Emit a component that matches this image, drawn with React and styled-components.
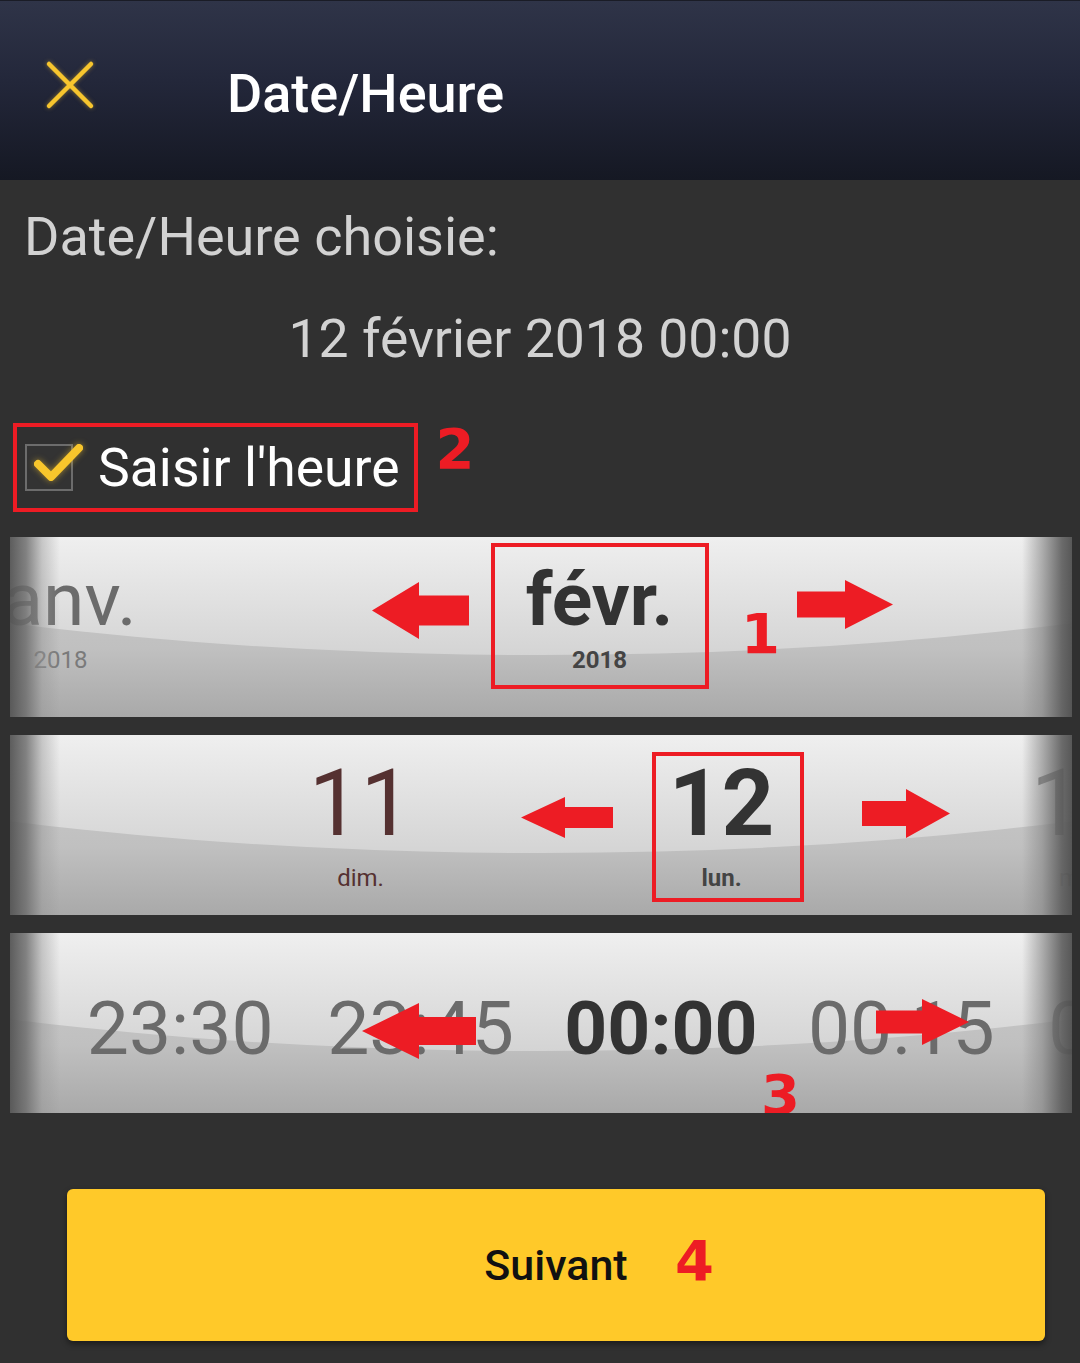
import React from "react";
import styled, { createGlobalStyle } from "styled-components";

const GlobalStyle = createGlobalStyle`
  html, body {
    margin: 0;
    padding: 0;
    background: #303030;
  }
  body {
    font-family: Roboto, "Noto Sans", sans-serif;
  }
`;

const months = [
  { label: "janv.", sub: "2018" },
  { label: "févr.", sub: "2018", active: true },
];

const days = [
  { label: "11", sub: "dim.", sunday: true },
  { label: "12", sub: "lun.", active: true },
  { label: "13", sub: "mar." },
];

const times = [
  { label: "23:30" },
  { label: "23:45" },
  { label: "00:00", active: true },
  { label: "00:15" },
  { label: "00:30" },
];

function CloseIcon() {
  return (
    <svg width="50" height="50" viewBox="0 0 50 50">
      <path
        d="M4 4 L46 46 M46 4 L4 46"
        stroke="#f7c52e"
        strokeWidth="4.5"
        strokeLinecap="round"
        fill="none"
      />
    </svg>
  );
}

function Arrow({ x, y, w, h, head, shaft, dir }) {
  const top = (h - shaft) / 2;
  const bottom = (h + shaft) / 2;
  const pts =
    dir === "right"
      ? `0,${top} ${w - head},${top} ${w - head},0 ${w},${h / 2} ${w - head},${h} ${w - head},${bottom} 0,${bottom}`
      : `${w},${top} ${head},${top} ${head},0 0,${h / 2} ${head},${h} ${head},${bottom} ${w},${bottom}`;
  return (
    <ArrowBox $x={x} $y={y} width={w} height={h} viewBox={`0 0 ${w} ${h}`}>
      <polygon points={pts} fill="#ed1c24" />
    </ArrowBox>
  );
}

function App() {
  return (
    <>
      <GlobalStyle />
      <Screen>
        <Header>
          <CloseButton>
            <CloseIcon />
          </CloseButton>
          <HeaderTitle>Date/Heure</HeaderTitle>
        </Header>

        <Main>
          <Label>Date/Heure choisie:</Label>
          <ChosenDate>12 février 2018 00:00</ChosenDate>

          <CheckRow>
            <CheckFrame>
              <CheckBox>
                <svg width="58" height="50" viewBox="0 0 58 50">
                  <path
                    d="M9 22 L22 35 L50 6"
                    stroke="#f8c62c"
                    strokeWidth="8"
                    strokeLinecap="round"
                    strokeLinejoin="round"
                    fill="none"
                  />
                </svg>
              </CheckBox>
              <CheckLabel>Saisir l'heure</CheckLabel>
            </CheckFrame>
            <Mark $inline>2</Mark>
          </CheckRow>

          <Wheel>
            <Track $offset={-219} $pad={25}>
              {months.map((m) => (
                <Cell key={m.label} $w={539}>
                  <Big $size={75} $active={m.active}>
                    {m.label}
                  </Big>
                  <Small $gap={11} $active={m.active} $color="#7a7a7a">
                    {m.sub}
                  </Small>
                </Cell>
              ))}
            </Track>
            <Frame $x={481} $y={6} $w={218} $h={146} />
            <Arrow x={362} y={45} w={97} h={57} head={47} shaft={30} dir="left" />
            <Arrow x={787} y={43} w={96} h={49} head={48} shaft={26} dir="right" />
            <Mark $x={731} $y={69}>1</Mark>
          </Wheel>

          <Wheel>
            <Track $offset={170} $pad={23}>
              {days.map((d) => (
                <Cell key={d.label} $w={361}>
                  <Big $size={92} $active={d.active} $color={d.sunday ? "#553131" : "#6b6b6b"}>
                    {d.label}
                  </Big>
                  <Small $gap={16} $active={d.active} $color={d.sunday ? "#553131" : "#7a7a7a"}>
                    {d.sub}
                  </Small>
                </Cell>
              ))}
            </Track>
            <Frame $x={642} $y={17} $w={152} $h={150} />
            <Arrow x={511} y={62} w={92} h={41} head={44} shaft={21} dir="left" />
            <Arrow x={852} y={54} w={88} h={49} head={44} shaft={25} dir="right" />
          </Wheel>

          <Wheel>
            <Track $offset={50} $pad={58}>
              {times.map((t) => (
                <Cell key={t.label} $w={240.4}>
                  <Big $size={75} $active={t.active}>
                    {t.label}
                  </Big>
                </Cell>
              ))}
            </Track>
            <Arrow x={352} y={70} w={114} h={56} head={57} shaft={28} dir="left" />
            <Arrow x={866} y={66} w={93} h={46} head={47} shaft={23} dir="right" />
            <Mark $x={751} $y={134}>3</Mark>
          </Wheel>

          <NextButton>
            Suivant
            <Mark $x={608} $y={44}>4</Mark>
          </NextButton>
        </Main>
      </Screen>
    </>
  );
}

export default App;

const Screen = styled.div`
  width: 1080px;
  height: 1363px;
  background: #303030;
  overflow: hidden;
`;

const Header = styled.header`
  height: 180px;
  display: flex;
  align-items: flex-start;
  padding-left: 45px;
  box-sizing: border-box;
  background: linear-gradient(to bottom, #2f3448 0%, #23273a 45%, #151823 100%);
  border-top: 1px solid #1a1c26;
`;

const CloseButton = styled.div`
  width: 50px;
  height: 50px;
  margin-top: 59px;
  filter: drop-shadow(0 0 2px rgba(247, 197, 46, 0.5));
`;

const HeaderTitle = styled.h1`
  margin: 66px 0 0 132px;
  font-family: Roboto, sans-serif;
  font-size: 54px;
  line-height: 54px;
  font-weight: 500;
  color: #ffffff;
`;

const Main = styled.main`
  display: flex;
  flex-direction: column;
`;

const Label = styled.div`
  margin: 27px 0 0 24px;
  font-size: 54px;
  line-height: 60px;
  color: #d2d2d2;
`;

const ChosenDate = styled.div`
  margin-top: 42px;
  text-align: center;
  font-size: 53.5px;
  line-height: 60px;
  color: #d2d2d2;
`;

const CheckRow = styled.div`
  display: flex;
  align-items: flex-start;
  margin: 54px 0 0 13px;
  gap: 18px;
`;

const CheckFrame = styled.div`
  display: flex;
  align-items: center;
  height: 89px;
  box-sizing: border-box;
  border: 4px solid #ed1c24;
  padding: 0 14px 0 8px;
`;

const CheckBox = styled.div`
  position: relative;
  width: 48px;
  height: 47px;
  box-sizing: border-box;
  border: 2px solid #6c6c6c;
  background: #333333;
  svg {
    position: absolute;
    left: 2px;
    top: -4px;
    filter: drop-shadow(0 0 3px rgba(248, 198, 44, 0.55));
  }
`;

const CheckLabel = styled.span`
  margin-left: 25px;
  font-size: 53.5px;
  line-height: 60px;
  color: #ffffff;
`;

const Mark = styled.span`
  position: ${(p) => (p.$inline ? "static" : "absolute")};
  left: ${(p) => p.$x || 0}px;
  top: ${(p) => p.$y || 0}px;
  margin-top: ${(p) => (p.$inline ? "-2px" : "0")};
  z-index: 4;
  font-family: "DejaVu Sans", sans-serif;
  font-weight: 700;
  font-size: 56px;
  line-height: 56px;
  color: #ed1c24;
`;

const Wheel = styled.div`
  position: relative;
  margin: 25px 8px 0 10px;
  height: 180px;
  overflow: hidden;
  background: linear-gradient(to bottom, #cdcdcd 0%, #c0c0c0 62%, #a9a9a9 100%);

  & + & {
    margin-top: 18px;
  }

  &::before {
    content: "";
    position: absolute;
    left: -669px;
    top: -498px;
    width: 2400px;
    height: 616px;
    border-radius: 50%;
    background: linear-gradient(to bottom, #efefef 498px, #d4d4d4 616px);
    z-index: 0;
  }

  &::after {
    content: "";
    position: absolute;
    inset: 0;
    z-index: 2;
    pointer-events: none;
    background: linear-gradient(
      to right,
      rgba(85, 85, 85, 0.95) 0px,
      rgba(110, 110, 110, 0.85) 16px,
      rgba(150, 150, 150, 0.45) 32px,
      rgba(200, 200, 200, 0) 50px,
      rgba(200, 200, 200, 0) calc(100% - 50px),
      rgba(140, 140, 140, 0.65) calc(100% - 30px),
      rgba(95, 95, 95, 0.92) calc(100% - 10px),
      rgba(80, 80, 80, 0.95) 100%
    );
  }
`;

const Track = styled.div`
  position: relative;
  z-index: 1;
  display: flex;
  padding-top: ${(p) => p.$pad}px;
  transform: translateX(${(p) => p.$offset}px);
`;

const Cell = styled.div`
  flex: 0 0 ${(p) => p.$w}px;
  display: flex;
  flex-direction: column;
  align-items: center;
`;

const Big = styled.div`
  font-family: Roboto, sans-serif;
  font-size: ${(p) => p.$size}px;
  line-height: ${(p) => p.$size}px;
  font-weight: ${(p) => (p.$active ? 700 : 400)};
  color: ${(p) => (p.$active ? "#333333" : p.$color || "#6b6b6b")};
  white-space: nowrap;
`;

const Small = styled.div`
  margin-top: ${(p) => p.$gap}px;
  font-family: Roboto, sans-serif;
  font-size: 24px;
  line-height: 24px;
  font-weight: ${(p) => (p.$active ? 700 : 400)};
  color: ${(p) => (p.$active ? "#444444" : p.$color)};
`;

const Frame = styled.div`
  position: absolute;
  left: ${(p) => p.$x}px;
  top: ${(p) => p.$y}px;
  width: ${(p) => p.$w}px;
  height: ${(p) => p.$h}px;
  box-sizing: border-box;
  border: 4px solid #ed1c24;
  z-index: 3;
`;

const ArrowBox = styled.svg`
  position: absolute;
  left: ${(p) => p.$x}px;
  top: ${(p) => p.$y}px;
  z-index: 3;
`;

const NextButton = styled.button`
  position: relative;
  margin: 76px 0 0 67px;
  width: 978px;
  height: 152px;
  border: none;
  border-radius: 6px;
  background: #ffc929;
  box-shadow: 0 3px 6px rgba(0, 0, 0, 0.45);
  font-family: Roboto, sans-serif;
  font-size: 43px;
  font-weight: 500;
  color: #111111;
  display: flex;
  align-items: center;
  justify-content: center;
  padding: 0;
`;
